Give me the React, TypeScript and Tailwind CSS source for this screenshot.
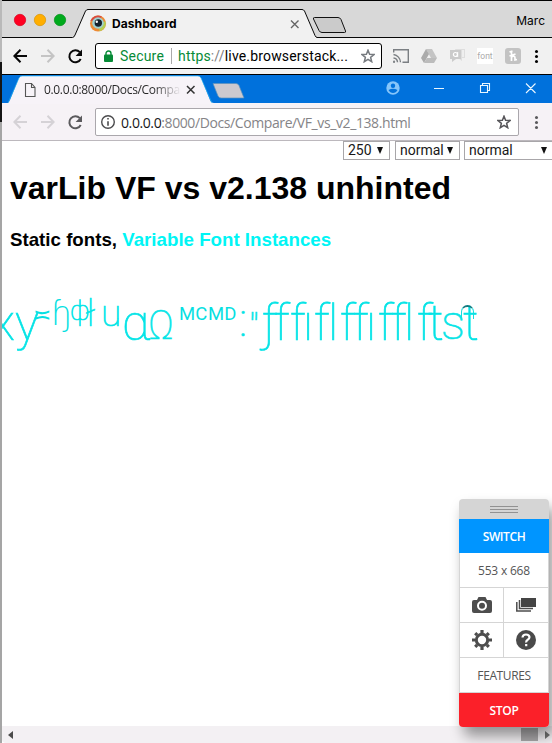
import React from "react";

// Specimen glyphs: text, cell width, size and vertical shift
type Glyph = { ch: string; w: string; cls: string };

const glyphs: Glyph[] = [
  { ch: "x", w: "w-[24px]", cls: "text-[50px] pt-[0px]" },
  { ch: "y", w: "w-[18px]", cls: "text-[50px] pt-[0px]" },
  { ch: "≍", w: "w-[18px]", cls: "text-[22px] -mt-[8px] font-['DejaVu_Sans'] [-webkit-text-stroke:0px]" },
  { ch: "ɧ", w: "w-[19px]", cls: "text-[33px] -mt-[9px] font-['DejaVu_Sans'] font-extralight [-webkit-text-stroke:0px]" },
  { ch: "ф", w: "w-[16px]", cls: "text-[27px] -mt-[12px]" },
  { ch: "ł", w: "w-[15px]", cls: "text-[36px] -mt-[9px]" },
  { ch: "u", w: "w-[21px]", cls: "text-[37px] -mt-[9px]" },
  { ch: "α", w: "w-[26px]", cls: "text-[50px]" },
  { ch: "Ω", w: "w-[31px]", cls: "text-[40px] pt-[3px]" },
  { ch: "MC", w: "w-[29px]", cls: "text-[18.500px] -mt-[9px] font-normal [-webkit-text-stroke:0px]" },
  { ch: "MD", w: "w-[31px]", cls: "text-[18.500px] -mt-[9px] font-normal [-webkit-text-stroke:0px]" },
  { ch: ":", w: "w-[10px]", cls: "text-[46px] -mt-[3px]" },
  { ch: '"', w: "w-[13px]", cls: "text-[38px] pt-[5px]" },
  { ch: "ƒ", w: "w-[12px]", cls: "text-[50px]" },
  { ch: "f", w: "w-[16px]", cls: "text-[50px]" },
  { ch: "f", w: "w-[13px]", cls: "text-[50px]" },
  { ch: "ı", w: "w-[11px]", cls: "text-[50px]" },
  { ch: "f", w: "w-[14px]", cls: "text-[50px]" },
  { ch: "l", w: "w-[12px]", cls: "text-[50px]" },
  { ch: "f", w: "w-[13px]", cls: "text-[50px]" },
  { ch: "f", w: "w-[13px]", cls: "text-[50px]" },
  { ch: "ı", w: "w-[12px]", cls: "text-[50px]" },
  { ch: "f", w: "w-[13px]", cls: "text-[50px]" },
  { ch: "f", w: "w-[13px]", cls: "text-[50px]" },
  { ch: "l", w: "w-[13px]", cls: "text-[50px]" },
  { ch: "f", w: "w-[11px]", cls: "text-[50px]" },
  { ch: "t", w: "w-[13px]", cls: "text-[50px]" },
  { ch: "s", w: "w-[22px]", cls: "text-[48px]" },
  { ch: "t", w: "w-[15px]", cls: "text-[50px]" },
];

function Arrow({ flip = false, color, w = 2 }: { flip?: boolean; color: string; w?: number }) {
  return (
    <svg width="14" height="14" viewBox="0 0 14 14" className={flip ? "rotate-180" : ""} fill="none" stroke={color} strokeWidth={w}>
      <path d="M14 7H1.500M7.500 .8L1.400 7l6.100 6.200" />
    </svg>
  );
}

function Reload({ color }: { color: string }) {
  return (
    <svg width="15" height="15" viewBox="0 0 15 15" fill="none">
      <path d="M12.700 10A6 6 0 1 1 11.800 3.200" stroke={color} strokeWidth="2" />
      <path d="M14 .5V7H7.600Z" fill={color} />
    </svg>
  );
}

function Star({ color }: { color: string }) {
  return (
    <svg width="14" height="14" viewBox="0 0 14 14" fill="none" stroke={color} strokeWidth="1.500">
      <path d="M7 1.200l1.600 4 4.500.3-3.500 2.800 1.100 4.400L7 10.300l-3.700 2.400 1.100-4.400L.9 5.500l4.500-.3Z" />
    </svg>
  );
}

function Dots({ cls }: { cls: string }) {
  return (
    <div className="flex flex-col gap-[2px]">
      {[0, 1, 2].map((i) => (
        <i key={i} className={`size-[3px] rounded-full ${cls}`} />
      ))}
    </div>
  );
}

function OuterTabs() {
  return (
    <div className="relative h-[37px] w-full bg-[#d8d8d8]">
      <svg className="absolute inset-0" width="550" height="37" viewBox="2 1 550 37">
        <path d="M2 38V37.500H72.500Q74 37.500 75 35L85.500 11Q86.500 9.500 88 9.500H302Q303.500 9.500 304.500 11L315 35.500Q316 37.500 317 37.500H552V38Z" fill="#f1f1f1" />
        <path d="M2 37.500H72.500Q74 37.500 75 35L85.500 11Q86.500 9.500 88 9.500H302Q303.500 9.500 304.500 11L315 35.500Q316 37.500 317 37.500H552" fill="none" stroke="#080808" />
        <path d="M314.500 17.500H338Q340 17.500 341 19.500L345.500 31Q346 32.500 344.500 32.500H322Q320 32.500 319 30.500L313.500 19Q313 17.500 314.500 17.500Z" fill="#cbcbcb" stroke="#111" />
        <g strokeWidth=".7">
          <circle cx="20" cy="20" r="5.700" fill="#ff0022" stroke="#d9001c" />
          <circle cx="40" cy="20" r="5.700" fill="#ffae00" stroke="#d99400" />
          <circle cx="60" cy="20" r="5.700" fill="#00aa1c" stroke="#008f18" />
        </g>
        <circle cx="98" cy="23.500" r="8" fill="#ee8b35" />
        <path d="M90.300 21A8 8 0 0 1 102 16.700L98 20Z" fill="#d94b3f" />
        <path d="M105.500 21a8 8 0 0 1-6 10.300l-1-6Z" fill="#b7cf50" />
        <circle cx="98" cy="23" r="5.800" fill="#9fd0cf" />
        <circle cx="98.300" cy="23" r="3.700" fill="#17212b" />
        <circle cx="96.800" cy="21.700" r="1.200" fill="#fff" />
        <path d="M291 20.500l7.500 7.500m0-7.500l-7.500 7.500" stroke="#666" strokeWidth="1.400" />
      </svg>
      <div className="relative flex h-full items-center justify-between pl-[110px] pr-[7px]">
        <span className="pt-[8px] font-['Inter',sans-serif] text-[12px] font-bold tracking-[0.080px] text-black">Dashboard</span>
        <span className="pt-[3px] font-['Inter',sans-serif] text-[12px] text-black">Marc</span>
      </div>
    </div>
  );
}

function OuterToolbar() {
  return (
    <div className="flex h-[36px] items-center bg-[#f1f1f1] pl-[11px]">
      <Arrow color="#080808" />
      <div className="ml-[14px]"><Arrow flip color="#c4c4c4" /></div>
      <div className="ml-[13px]"><Reload color="#080808" /></div>
      <div className="ml-[12px] flex h-[26px] w-[287px] shrink-0 items-center rounded-[3px] border border-black bg-white font-['Roboto',sans-serif] text-[14px] text-black">
        <svg className="ml-[8px]" width="9" height="12" viewBox="0 0 9 12">
          <path d="M2 6V3.500a2.500 2.500 0 0 1 5 0V6" fill="none" stroke="#078b37" strokeWidth="1.400" />
          <rect y="4.500" width="9" height="7.500" rx="1" fill="#078b37" />
        </svg>
        <span className="ml-[7px] w-[46px] tracking-[0.200px] text-[#078b37]">Secure</span>
        <i className="ml-[5px] h-[16px] w-px bg-[#aaa]" />
        <span className="ml-[6px] w-[170px] whitespace-nowrap tracking-[0.170px]"><span className="text-[#078b37]">https</span><span className="text-[#808080]">://</span>live.browserstack...</span>
        <div className="ml-[13px]"><Star color="#777b80" /></div>
      </div>
      <svg className="ml-[11px]" width="16" height="14" viewBox="0 0 16 14" fill="none" stroke="#7b7f83" strokeWidth="1.400">
        <path d="M.7 3.500V.7h14.600v12.500H9.500M.5 5.500a8 8 0 0 1 7 7.800M.5 9a4.500 4.500 0 0 1 4 4.300" /><circle cx="1" cy="12.800" r=".5" />
      </svg>
      <svg className="ml-[12px]" width="16" height="15" viewBox="0 0 16 15">
        <path d="M5 0h6l5 9h-6Z" fill="#c4c4c4" /><path d="M5 0L0 9l3 5L8 5Z" fill="#ababab" /><path d="M6 9h10l-3 5H3Z" fill="#bcbcbc" />
      </svg>
      <svg className="ml-[12px]" width="17" height="14" viewBox="0 0 17 14">
        <path d="M6 0h10v9h-3v3l-4-3Z" fill="#dedede" /><path d="M1 1h11v9H7l-4 3v-3H1Z" fill="#cbcbcb" />
        <circle cx="6.400" cy="5.500" r="2" fill="none" stroke="#fff" strokeWidth="1.200" /><path d="M8.700 3v5M14 1v7" stroke="#fff" />
      </svg>
      <span className="ml-[11px] flex h-[16px] w-[16px] items-center justify-center bg-white font-['Roboto',sans-serif] text-[8.500px] text-[#aaa]"><span>font</span></span>
      <span className="ml-[12px] flex size-[16px] items-center justify-center rounded-[3px] bg-[#c3c3c3]">
        <svg width="10" height="12" viewBox="0 0 10 12" fill="none" stroke="white" strokeWidth="1.700"><path d="M3.500 1v10M1.500 2l3-1M1.500 6l6-2M3.500 7q3.500-2 3.500 1v2l2-.5" /></svg>
      </span>
      <div className="ml-[14px]"><Dots cls="bg-black" /></div>
    </div>
  );
}

function InnerTabs() {
  return (
    <div className="relative h-[29px] bg-[#0071dc]">
      <svg className="absolute inset-0" width="550" height="29" viewBox="2 75 550 29" fill="none">
        <path d="M2 104v-1H8Q9 102 10 100L19 78Q20 76 22 76H198Q200 76 201 78L210 100Q211 103 214 103H552v1Z" fill="#f7f3f8" />
        <path d="M8 103L19 78Q20 76 22 76H198Q200 76 201 78L212 103" stroke="#28baf2" strokeWidth=".6" />
        <path d="M213 83.500H236q2 0 3 2l5 12.500h-23q-2 0-3-2l-5-12.500Z" fill="#ccc9cf" stroke="#5a91bb" strokeWidth=".7" />
        <path d="M25.500 83.500h6l3.500 4v9h-9.500ZM31.500 83.500v4H35" stroke="#555" strokeWidth="1.100" />
        <path d="M187 86l7.500 7.500m0-7.500L187 93.500" stroke="#333" strokeWidth="1.500" />
        <circle cx="393" cy="88" r="6.700" fill="#86c5fa" />
        <circle cx="393" cy="85.700" r="2.200" fill="#0071dc" /><path d="M388.500 90q4.500-2.500 9 0-1.500 3-4.500 3t-4.500-3Z" fill="#0071dc" />
        <path d="M434 88.500h10M480.500 85.500h7v7h-7ZM482.500 85v-1.500h7v7H488M526 83.500l9.500 9.500m0-9.500L526 93" stroke="#e9f6ff" strokeWidth="1.100" />
      </svg>
      <div className="relative flex h-full items-center pl-[42px]">
        <span className="w-[137px] overflow-hidden whitespace-nowrap bg-gradient-to-r from-[#252525] from-80% to-transparent bg-clip-text font-['Open_Sans',sans-serif] text-[12px] tracking-[-0.340px] text-transparent">0.0.0.0:8000/Docs/Compare</span>
      </div>
    </div>
  );
}

function InnerToolbar() {
  return (
    <div className="flex h-[37px] items-center border-b border-[#bcb8bd] bg-[#f6f2f6] pl-[11px]">
      <Arrow color="#d5d2d6" />
      <div className="ml-[14px]"><Arrow flip color="#d5d2d6" /></div>
      <div className="ml-[13px]"><Reload color="#5b5a5d" /></div>
      <div className="ml-[12px] flex h-[28px] w-[424px] shrink-0 items-center rounded-[2px] border border-[#aaa7ac] bg-white">
        <svg className="ml-[5px]" width="14" height="14" viewBox="0 0 14 14" fill="none" stroke="#4b4b4d" strokeWidth="1.400">
          <circle cx="7" cy="7" r="6.300" /><path d="M7 6.200v4.500M7 3v1.600" strokeWidth="1.600" />
        </svg>
        <span className="ml-[6px] w-[370px] whitespace-nowrap font-['Open_Sans',sans-serif] text-[14px] tracking-[-0.400px] text-[#858487]"><span className="text-[#17171a]">0.0.0.0</span>:8000/Docs/Compare/VF_vs_v2_138.html</span>
        <div className="ml-[6px]"><Star color="#565559" /></div>
      </div>
      <div className="ml-[16px]"><Dots cls="bg-[#59585b]" /></div>
    </div>
  );
}

function Choice({ text, cls }: { text: string; cls: string }) {
  return (
    <div className={`flex h-[19px] shrink-0 items-center justify-between border border-[#a8a6a9] bg-white pl-[4px] font-['Roboto',sans-serif] text-[14px] text-[#181818] ${cls}`}>
      <span>{text}</span>
      <svg width="6" height="7" viewBox="0 0 6 7"><path d="M0 0h6L3 7Z" fill="#111" /></svg>
    </div>
  );
}

function Widget() {
  return (
    <div className="absolute left-[459px] top-[499px] flex h-[228px] w-[90px] flex-col rounded-[4px] bg-white font-['Open_Sans',sans-serif] text-[12px] text-[#555] shadow-[5px_9px_14px_rgba(0,0,0,0.4)]">
      <div className="flex h-[20px] flex-col items-center justify-center gap-[2px] rounded-t-[4px] bg-[#d5d5d5]">
        <i className="h-px w-[28px] bg-[#929292]" /><i className="h-px w-[28px] bg-[#929292]" /><i className="h-px w-[28px] bg-[#929292]" />
      </div>
      <div className="flex h-[34px] items-center justify-center bg-[#0095ff] pt-px font-semibold tracking-[-0.400px] text-white">SWITCH</div>
      <div className="flex h-[35px] items-center justify-center border-x border-b border-[#d5d5d5] pt-px font-medium tracking-[-0.200px]">553 x 668</div>
      <div className="grid h-[70px] grid-cols-2 grid-rows-2 border-x border-[#d5d5d5]">
        <div className="flex items-center justify-center border-b border-r border-[#d5d5d5]">
          <svg width="20" height="16" viewBox="0 0 20 16"><path d="M2 3h3l1.500-3h7L15 3h3q2 0 2 2v9q0 2-2 2H2q-2 0-2-2V5q0-2 2-2Z" fill="#4d4d4d" /><circle cx="10" cy="8.800" r="4" fill="#4d4d4d" stroke="#fff" strokeWidth="2" /></svg>
        </div>
        <div className="flex items-center justify-center border-b border-[#d5d5d5]">
          <svg width="20" height="14" viewBox="0 0 20 14"><path d="M5 0h15v9H5Z" fill="#444" /><path d="M3.500 2v8.500H17M.8 4v9H15" fill="none" stroke="#4d4d4d" strokeWidth="1.500" /></svg>
        </div>
        <div className="flex items-center justify-center border-b border-r border-[#d5d5d5]">
          <svg width="20" height="20" viewBox="0 0 20 20"><circle cx="10" cy="10" r="5.700" fill="none" stroke="#4d4d4d" strokeWidth="3" /><path d="M10 0v3M10 17v3M0 10h3M17 10h3M3.200 3.200l2 2M14.800 14.800l2 2M16.800 3.200l-2 2M5.200 14.800l-2 2" stroke="#4d4d4d" strokeWidth="3.200" /></svg>
        </div>
        <div className="flex items-center justify-center border-b border-[#d5d5d5]">
          <svg width="20" height="20" viewBox="0 0 20 20"><circle cx="10" cy="10" r="10" fill="#4a4a4a" /><path d="M6.500 7.500q.3-3 3.500-3t3.500 2.600q0 1.600-1.800 2.600T10.200 12.500M10.200 14v2.300" fill="none" stroke="#fff" strokeWidth="2.200" /></svg>
        </div>
      </div>
      <div className="flex h-[35px] items-center justify-center border-x border-b border-[#d5d5d5] pt-[2px] font-medium tracking-[-0.400px]">FEATURES</div>
      <div className="flex h-[34px] items-center justify-center rounded-b-[4px] bg-[#fb2029] pt-px font-semibold tracking-[-0.300px] text-white">STOP</div>
    </div>
  );
}

export default function App() {
  return (
    <div className="relative flex h-[743px] w-[552px] overflow-hidden bg-white">
      <div className="flex w-[2px] shrink-0 flex-col">
        <div className="h-[62px] bg-[#b9b9b9]" />
        <div className="h-[60px] bg-[#151515]" />
        <div className="flex-1 bg-[#a5a5a5]" />
      </div>
      <div className="flex w-[550px] shrink-0 flex-col overflow-hidden rounded-bl-[4px] border-t border-black">
        <OuterTabs />
        <OuterToolbar />
        <div className="h-px bg-black" />
        <InnerTabs />
        <InnerToolbar />
        <main className="flex h-[585px] flex-col overflow-hidden bg-white">
          <div className="flex h-[19px] shrink-0 pl-[341px]">
            <Choice text="250" cls="w-[47px] pr-[6px]" />
            <Choice text="normal" cls="ml-[5px] w-[65px] pr-[6px]" />
            <Choice text="normal" cls="ml-[4px] w-[92px] pr-[8px]" />
          </div>
          <h1 className="mt-[10px] pl-[8px] font-['Liberation_Sans',sans-serif] text-[32px] font-bold leading-[36px] text-black">varLib VF vs v2.138 unhinted</h1>
          <h2 className="mt-[23px] whitespace-nowrap pl-[8px] font-['Liberation_Sans',sans-serif] text-[18.720px] font-bold leading-[22px] text-black">Static fonts, <span className="text-[#00f5f5]">Variable Font Instances</span></h2>
          <div className="relative mt-[42px] flex h-[60px] shrink-0 items-start font-['Roboto',sans-serif] font-thin leading-[60px] text-[#06dfe2] [-webkit-text-stroke:0.700px_#06e6e8]">
            {glyphs.map((g, i) => (
              <span key={i} className={`shrink-0 whitespace-nowrap ${i === 0 ? "-ml-[11px]" : ""} ${g.w} ${g.cls}`}>{g.ch}</span>
            ))}
            <i className="absolute left-[459px] top-[12px] h-[14px] w-[13px] rounded-t-full border-x border-t-2 border-x-[#14dede] border-t-[#127b80]" />
          </div>
        </main>
        <div className="flex h-[17px] items-center justify-between bg-[#f3f0f3] pl-[6px] pr-[2px]">
          <svg width="5" height="8" viewBox="0 0 5 8"><path d="M5 0v8L0 4Z" fill="#4b4b4b" /></svg>
          <div className="flex h-full items-center gap-[7px]">
            <i className="h-[13px] w-[17px] bg-[#a9a7a9]" />
            <svg width="5" height="8" viewBox="0 0 5 8"><path d="M0 0v8L5 4Z" fill="#737373" /></svg>
          </div>
        </div>
      </div>
      <Widget />
    </div>
  );
}
